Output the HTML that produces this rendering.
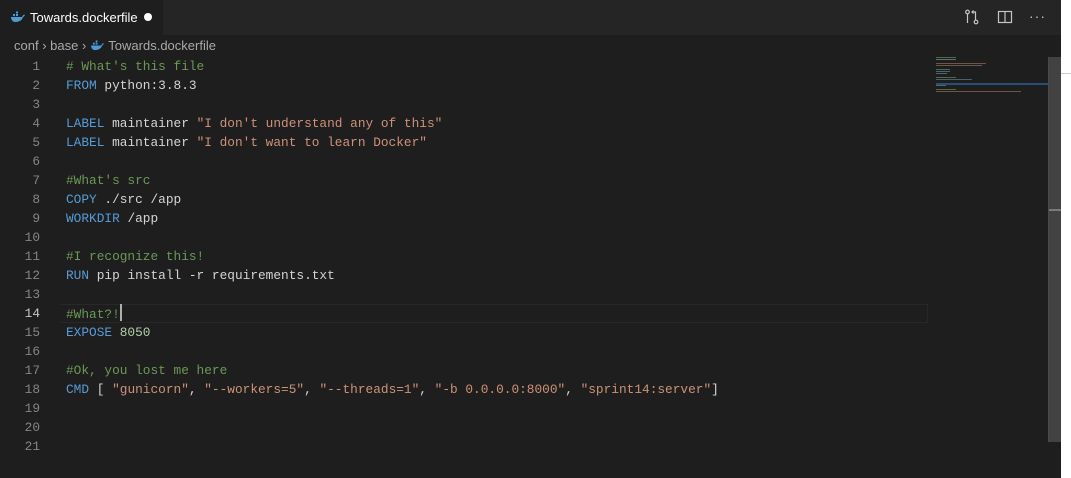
<!DOCTYPE html>
<html><head><style>
*{margin:0;padding:0;box-sizing:border-box}
body{width:1071px;height:478px;background:#1e1e1e;overflow:hidden;position:relative;font-family:"Liberation Sans",sans-serif}
.tabbar{position:absolute;left:0;top:0;width:1061px;height:35px;background:#252526}
.tab{position:absolute;left:0;top:0;width:163px;height:35px;background:#1e1e1e;color:#fff;font-size:13px;line-height:35px;padding-left:30px}
.dot{position:absolute;left:144px;top:13px;width:8px;height:8px;border-radius:50%;background:#fff}
.crumb{position:absolute;left:14px;top:38px;font-size:13px;color:#a9a9a9;line-height:16px}
.code{position:absolute;left:0;top:57px;font-family:"Liberation Mono",monospace;font-size:12.8px;line-height:19px;white-space:pre}
.ln{position:absolute;left:0;width:40px;text-align:right;color:#858585}
.tx{position:absolute;left:66px}
.c{color:#6a9955}.k{color:#569cd6}.s{color:#ce9178}.w{color:#d4d4d4}.n{color:#b5cea8}
.cur{position:absolute;left:61px;top:304px;width:867px;height:19px;border:1px solid #282828;border-left:none}
.right{position:absolute;left:1061px;top:0;width:10px;height:478px;background:#fff}
.sb{position:absolute;left:1048px;top:57px;width:13px;height:385px;background:#424242;border-left:1px solid #4a4a4a}
.mm div{position:absolute;height:1px}
</style></head><body>
<div class="tabbar"></div>
<div class="tab">Towards.dockerfile<div class="dot"></div></div>
<svg style="position:absolute;left:10px;top:11px" width="16" height="12" viewBox="0 0 16 12"><path d="M1 6h11c1-2 2-3 3-2-1 1-1 2-2 2-1 4-5 5-8 5C3 11 1 9 1 6z" fill="#4a9bd6"/><rect x="3" y="3" width="2" height="2" fill="#4a9bd6"/><rect x="6" y="3" width="2" height="2" fill="#4a9bd6"/><rect x="6" y="0.5" width="2" height="2" fill="#4a9bd6"/></svg>
<svg style="position:absolute;left:964px;top:9px" width="16" height="16" viewBox="0 0 16 16" fill="none" stroke="#c5c5c5" stroke-width="1.2"><circle cx="3.5" cy="3" r="1.8"/><circle cx="12" cy="13" r="1.8"/><path d="M3.5 5v9M8 3h3.5v8M9.5 1.5L8 3l1.5 1.5"/></svg>
<svg style="position:absolute;left:997px;top:9px" width="16" height="16" viewBox="0 0 16 16" fill="none" stroke="#c5c5c5" stroke-width="1.2"><rect x="1.5" y="2.5" width="13" height="11"/><path d="M8 2.5v11"/></svg>
<div style="position:absolute;left:1029px;top:8px;color:#c5c5c5;font-size:14px;letter-spacing:1px">···</div>
<div class="crumb">conf <span>›</span> base <span>›</span> <svg width="15" height="11" viewBox="0 0 16 12" style="vertical-align:-1px"><path d="M1 6h11c1-2 2-3 3-2-1 1-1 2-2 2-1 4-5 5-8 5C3 11 1 9 1 6z" fill="#4a9bd6"/><rect x="3" y="3" width="2" height="2" fill="#4a9bd6"/><rect x="6" y="3" width="2" height="2" fill="#4a9bd6"/><rect x="6" y="0.5" width="2" height="2" fill="#4a9bd6"/></svg> Towards.dockerfile</div>
<div class="cur"></div>
<div class="code">
<div class="ln" style="top:0">1</div><div class="tx c" style="top:0"># What's this file</div>
<div class="ln" style="top:19px">2</div><div class="tx" style="top:19px"><span class="k">FROM</span><span class="w"> python:3.8.3</span></div>
<div class="ln" style="top:38px">3</div>
<div class="ln" style="top:57px">4</div><div class="tx" style="top:57px"><span class="k">LABEL</span><span class="w"> maintainer </span><span class="s">"I don't understand any of this"</span></div>
<div class="ln" style="top:76px">5</div><div class="tx" style="top:76px"><span class="k">LABEL</span><span class="w"> maintainer </span><span class="s">"I don't want to learn Docker"</span></div>
<div class="ln" style="top:95px">6</div>
<div class="ln" style="top:114px">7</div><div class="tx c" style="top:114px">#What's src</div>
<div class="ln" style="top:133px">8</div><div class="tx" style="top:133px"><span class="k">COPY</span><span class="w"> ./src /app</span></div>
<div class="ln" style="top:152px">9</div><div class="tx" style="top:152px"><span class="k">WORKDIR</span><span class="w"> /app</span></div>
<div class="ln" style="top:171px">10</div>
<div class="ln" style="top:190px">11</div><div class="tx c" style="top:190px">#I recognize this!</div>
<div class="ln" style="top:209px">12</div><div class="tx" style="top:209px"><span class="k">RUN</span><span class="w"> pip install -r requirements.txt</span></div>
<div class="ln" style="top:228px">13</div>
<div class="ln" style="top:247px;color:#c6c6c6">14</div><div class="tx c" style="top:247px">#What?!<span style="display:inline-block;width:2px;height:17px;background:#aeafad;vertical-align:-3px"></span></div>
<div class="ln" style="top:266px">15</div><div class="tx" style="top:266px"><span class="k">EXPOSE</span><span class="n"> 8050</span></div>
<div class="ln" style="top:285px">16</div>
<div class="ln" style="top:304px">17</div><div class="tx c" style="top:304px">#Ok, you lost me here</div>
<div class="ln" style="top:323px">18</div><div class="tx" style="top:323px"><span class="k">CMD</span><span class="w"> [ </span><span class="s">"gunicorn"</span><span class="w">, </span><span class="s">"--workers=5"</span><span class="w">, </span><span class="s">"--threads=1"</span><span class="w">, </span><span class="s">"-b 0.0.0.0:8000"</span><span class="w">, </span><span class="s">"sprint14:server"</span><span class="w">]</span></div>
<div class="ln" style="top:342px">19</div>
<div class="ln" style="top:361px">20</div>
<div class="ln" style="top:380px">21</div>
</div>
<div class="mm">
<div style="left:936px;top:57px;width:20px;background:#4f6b3e"></div>
<div style="left:936px;top:59px;width:20px;background:#5a6e80"></div>
<div style="left:936px;top:63px;width:50px;background:#6e5548"></div>
<div style="left:936px;top:65px;width:46px;background:#6e5548"></div>
<div style="left:936px;top:69px;width:14px;background:#4f6b3e"></div>
<div style="left:936px;top:71px;width:14px;background:#4a6478"></div>
<div style="left:936px;top:73px;width:11px;background:#4a6478"></div>
<div style="left:936px;top:77px;width:20px;background:#4f6b3e"></div>
<div style="left:936px;top:79px;width:36px;background:#4d5e6e"></div>
<div style="left:936px;top:83px;width:112px;height:2px;background:#264f78"></div>
<div style="left:936px;top:85px;width:10px;background:#4a6478"></div>
<div style="left:936px;top:89px;width:20px;background:#4f6b3e"></div>
<div style="left:936px;top:91px;width:85px;background:#6e5548"></div>
</div>
<div class="sb"></div>
<div style="position:absolute;left:1049px;top:209px;width:12px;height:2px;background:#7a7a7a"></div>
<div class="right"></div>
<div style="position:absolute;left:1061px;top:73px;width:10px;height:1px;background:#ccc"></div>
</body></html>
